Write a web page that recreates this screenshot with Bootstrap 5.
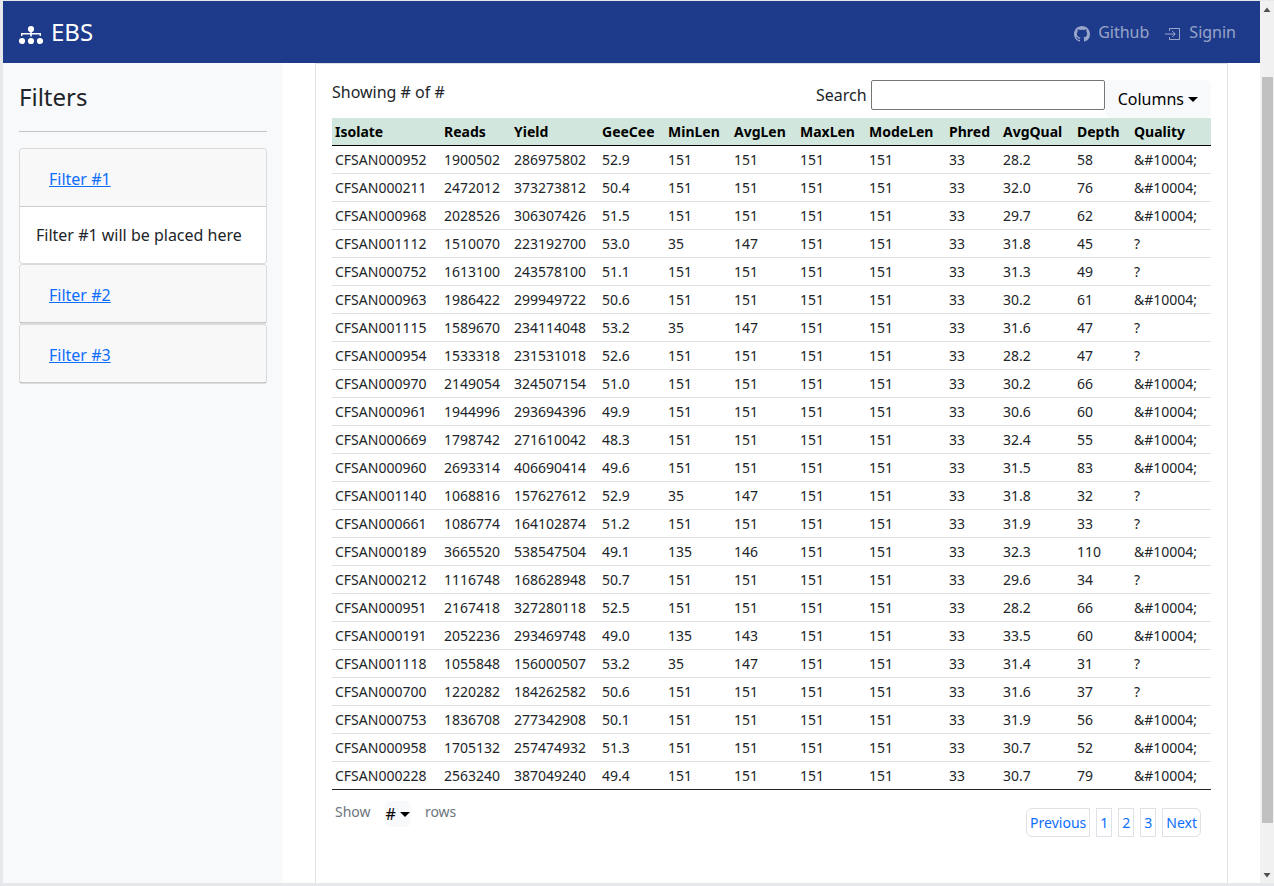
<!DOCTYPE html>
<html lang="en">
<head>
<meta charset="utf-8">
<meta name="viewport" content="width=device-width, initial-scale=1">
<title>EBS</title>
<link href="https://cdn.jsdelivr.net/npm/bootstrap@5.3.0/dist/css/bootstrap.min.css" rel="stylesheet">
<style>
  body { font-family: "Noto Sans", "Liberation Sans", sans-serif; background: #e6e8eb; color: #212529; }
  .window-frame { padding: 1px 0 3px 3px; }
  .topbar { background: #1e3a8a; height: 62px; padding: 0 24px 0 16px; }
  .topbar .navbar-brand { padding: 0; margin: 0; font-size: 24px; line-height: 36px; }
  .topbar .navbar-brand svg { margin: 6px 8px 0 0; }
  .topbar .navbar-nav .nav-link { color: rgba(255, 255, 255, .55); padding: 0; }
  .topbar .nav-link svg { margin: 3px 8px 0 0; }
  .filter-pane { width: 280px; background: #f8f9fa; }
  .filter-pane hr { margin: 16px 0; }
  .filter-pane .card { border-color: rgba(0, 0, 0, .14); border-radius: 4px; }
  .filter-pane .card-header { padding: 11px 16px 8px; }
  .results { border: 1px solid #dee2e6; border-bottom: 0; padding: 16px; margin: 0 32px; }
  .results .dropdown-toggle::after { border-width: 5px 5px 0; margin-left: 4px; vertical-align: 3px; }
  .search-box { width: 234px; height: 30px; border: 1px solid #767676; border-radius: 2px; margin-left: 4px; }
  .isolates { table-layout: fixed; font-size: 14px; line-height: 21px; margin: 0; }
  .isolates > :not(caption) > * > * { padding: 3px; white-space: nowrap; }
  .isolates thead th { background: #d1e7dd; color: #000; border-bottom: 1px solid #000; }
  .isolates tbody tr:last-child td { border-bottom-color: #212529; }
  .table-foot { font-size: 14px; line-height: 21px; padding: 11px 10px 0 3px; }
  .size-btn { padding: 0; height: 26px; line-height: 24px; margin: 0 14px; }
  .pager { gap: 6px; margin: 7px 0 0; }
  .pager .page-item .page-link { font-size: 14px; line-height: 21px; padding: 3px; margin: 0; color: #0d6efd; border-color: #dee2e6; }
  .scroll-track { width: 14px; background: #f1f1f1; }
  .scroll-thumb { background: #c1c1c1; width: 11px; margin-top: 60px; flex: 0 1 746px; }
</style>
</head>
<body>
<div class="window-frame d-flex vh-100 overflow-hidden">
  <div class="d-flex flex-column flex-grow-1 bg-white">
    <nav class="topbar navbar navbar-expand navbar-dark">
      <a class="navbar-brand d-flex align-items-center" href="#">
        <svg width="24" height="20" viewBox="0 0 24 20" fill="#fff" aria-hidden="true">
          <circle cx="12" cy="4" r="3.100"/><circle cx="3" cy="16" r="3.100"/><circle cx="12" cy="16" r="3.100"/><circle cx="21" cy="16" r="3.100"/>
          <path d="M11.200 6h1.600v2H22v3h-1.400V9.400h-7.800V11.500h-1.600V9.400H3.400V11H2V8h9.200z"/>
        </svg>EBS</a>
      <ul class="navbar-nav ms-auto">
        <li class="nav-item me-3"><a class="nav-link d-flex align-items-center" href="#">
          <svg width="16" height="16" viewBox="0 0 16 16" fill="currentColor" aria-hidden="true"><path d="M8 0C3.58 0 0 3.58 0 8c0 3.54 2.29 6.53 5.47 7.59.4.07.55-.17.55-.38 0-.19-.01-.82-.01-1.49-2.01.37-2.53-.49-2.69-.94-.09-.23-.48-.94-.82-1.13-.28-.15-.68-.52-.01-.53.63-.01 1.08.58 1.23.82.72 1.21 1.87.87 2.33.66.07-.52.28-.87.51-1.07-1.78-.2-3.64-.89-3.64-3.95 0-.87.31-1.59.82-2.15-.08-.2-.36-1.02.08-2.12 0 0 .67-.21 2.2.82.64-.18 1.32-.27 2-.27s1.36.09 2 .27c1.53-1.04 2.2-.82 2.2-.82.44 1.1.16 1.92.08 2.12.51.56.82 1.27.82 2.15 0 3.07-1.87 3.75-3.65 3.95.29.25.54.73.54 1.48 0 1.07-.01 1.93-.01 2.2 0 .21.15.46.55.38A8.01 8.01 0 0 0 16 8c0-4.42-3.58-8-8-8z"/></svg>Github</a></li>
        <li class="nav-item"><a class="nav-link d-flex align-items-center" href="#">
          <svg width="16" height="16" viewBox="0 0 16 16" fill="none" stroke="currentColor" aria-hidden="true"><path d="M4.500 5V2.500h10v11h-10V11M0 8h10M7.200 5l3 3-3 3"/></svg>Signin</a></li>
      </ul>
    </nav>
    <div class="d-flex flex-grow-1">
      <aside class="filter-pane p-3 flex-shrink-0">
        <h1 class="fs-4 fw-normal lh-base m-0">Filters</h1>
        <hr>
        <div class="card">
          <div class="card-header"><a class="btn btn-link" href="#filter1">Filter #1</a></div>
          <div class="card-body" id="filter1">Filter #1 will be placed here</div>
        </div>
        <div class="card"><div class="card-header"><a class="btn btn-link" href="#">Filter #2</a></div></div>
        <div class="card"><div class="card-header"><a class="btn btn-link" href="#">Filter #3</a></div></div>
      </aside>
      <main class="results flex-grow-1">
        <div class="d-flex align-items-start">
          <span class="me-auto">Showing # of #</span>
          <div class="d-flex align-items-center"><label for="search">Search</label><input class="search-box" id="search" type="text"></div>
          <button class="btn btn-light dropdown-toggle" type="button">Columns</button>
        </div>
        <table class="table isolates">
          <colgroup>
            <col style="width:109px"><col style="width:70px"><col style="width:88px"><col style="width:66px"><col style="width:66px"><col style="width:66px"><col style="width:69px"><col style="width:80px"><col style="width:54px"><col style="width:74px"><col style="width:57px"><col style="width:80px">
          </colgroup>
          <thead><tr><th>Isolate</th><th>Reads</th><th>Yield</th><th>GeeCee</th><th>MinLen</th><th>AvgLen</th><th>MaxLen</th><th>ModeLen</th><th>Phred</th><th>AvgQual</th><th>Depth</th><th>Quality</th></tr></thead>
          <tbody id="rows"></tbody>
        </table>
        <div class="table-foot d-flex align-items-start">
          <span class="text-secondary">Show</span>
          <button class="btn btn-light dropdown-toggle size-btn" type="button">#</button>
          <span class="text-secondary">rows</span>
          <ul class="pagination pager ms-auto">
            <li class="page-item"><a class="page-link" href="#">Previous</a></li>
            <li class="page-item"><a class="page-link" href="#">1</a></li>
            <li class="page-item"><a class="page-link" href="#">2</a></li>
            <li class="page-item"><a class="page-link" href="#">3</a></li>
            <li class="page-item"><a class="page-link" href="#">Next</a></li>
          </ul>
        </div>
      </main>
    </div>
  </div>
  <div class="scroll-track d-flex flex-column align-items-center flex-shrink-0" aria-hidden="true">
    <svg class="flex-shrink-0" width="14" height="16" viewBox="0 0 14 16"><path d="M3.500 11 7 6.500 10.500 11z" fill="#505050"/></svg>
    <div class="scroll-thumb"></div>
    <svg class="flex-shrink-0 mt-auto" width="14" height="16" viewBox="0 0 14 16"><path d="M3.500 6 7 10.500 10.500 6z" fill="#505050"/></svg>
  </div>
</div>
<script src="https://cdn.jsdelivr.net/npm/bootstrap@5.3.0/dist/js/bootstrap.bundle.min.js"></script>
<script>
  // isolate, reads, yield, GC, min, avg, max, mode, phred, avg quality, depth
  const data = `CFSAN000952 1900502 286975802 52.9 151 151 151 151 33 28.2 58
CFSAN000211 2472012 373273812 50.4 151 151 151 151 33 32.0 76
CFSAN000968 2028526 306307426 51.5 151 151 151 151 33 29.7 62
CFSAN001112 1510070 223192700 53.0 35 147 151 151 33 31.8 45
CFSAN000752 1613100 243578100 51.1 151 151 151 151 33 31.3 49
CFSAN000963 1986422 299949722 50.6 151 151 151 151 33 30.2 61
CFSAN001115 1589670 234114048 53.2 35 147 151 151 33 31.6 47
CFSAN000954 1533318 231531018 52.6 151 151 151 151 33 28.2 47
CFSAN000970 2149054 324507154 51.0 151 151 151 151 33 30.2 66
CFSAN000961 1944996 293694396 49.9 151 151 151 151 33 30.6 60
CFSAN000669 1798742 271610042 48.3 151 151 151 151 33 32.4 55
CFSAN000960 2693314 406690414 49.6 151 151 151 151 33 31.5 83
CFSAN001140 1068816 157627612 52.9 35 147 151 151 33 31.8 32
CFSAN000661 1086774 164102874 51.2 151 151 151 151 33 31.9 33
CFSAN000189 3665520 538547504 49.1 135 146 151 151 33 32.3 110
CFSAN000212 1116748 168628948 50.7 151 151 151 151 33 29.6 34
CFSAN000951 2167418 327280118 52.5 151 151 151 151 33 28.2 66
CFSAN000191 2052236 293469748 49.0 135 143 151 151 33 33.5 60
CFSAN001118 1055848 156000507 53.2 35 147 151 151 33 31.4 31
CFSAN000700 1220282 184262582 50.6 151 151 151 151 33 31.6 37
CFSAN000753 1836708 277342908 50.1 151 151 151 151 33 31.9 56
CFSAN000958 1705132 257474932 51.3 151 151 151 151 33 30.7 52
CFSAN000228 2563240 387049240 49.4 151 151 151 151 33 30.7 79`;
  const body = document.getElementById('rows');
  for (const line of data.split('\n')) {
    const cells = line.split(' ');
    // a depth of 50 or more passes
    cells.push(Number(cells[10]) >= 50 ? '&#10004;' : '?');
    const row = body.insertRow();
    for (const value of cells) row.insertCell().textContent = value;
  }
</script>
</body>
</html>
